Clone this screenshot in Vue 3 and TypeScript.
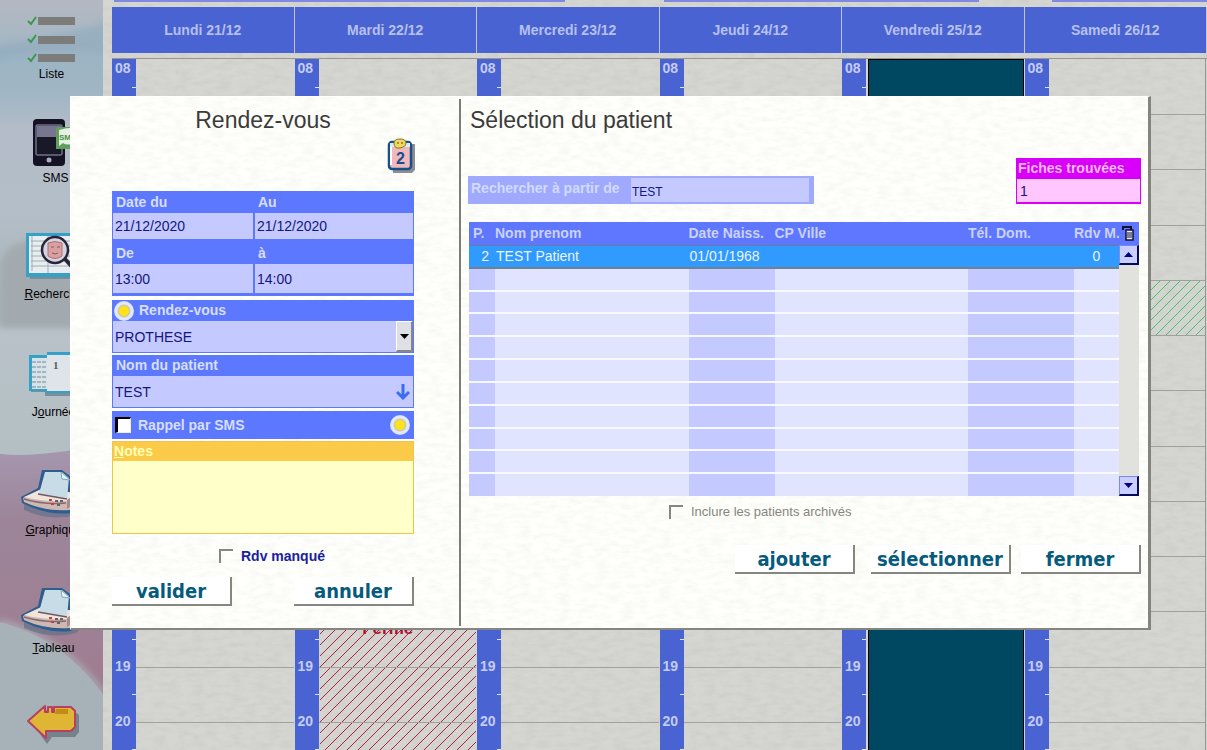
<script setup lang="ts">
import { ref } from 'vue'

interface Patient {
  p: string
  name: string
  birth: string
  city: string
  phone: string
  missed: string
}

interface NavItem {
  id: string
  key: string
  before: string
  after: string
}

interface Hour {
  value: number
  label: string
}

const nav: NavItem[] = [
  { id: 'liste', before: 'Liste', key: '', after: '' },
  { id: 'sms', before: 'SMS', key: '', after: '' },
  { id: 'recherche', before: '', key: 'R', after: 'echerche' },
  { id: 'journee', before: 'J', key: 'o', after: 'urnée' },
  { id: 'graphique', before: '', key: 'G', after: 'raphique' },
  { id: 'tableau', before: '', key: 'T', after: 'ableau' },
  { id: 'retour', before: 'Retour/Exit', key: '', after: '' },
]

const days = ['Lundi 21/12', 'Mardi 22/12', 'Mercredi 23/12', 'Jeudi 24/12', 'Vendredi 25/12', 'Samedi 26/12']

// Hours behind the open dialog keep their row but carry no label.
const hours: Hour[] = Array.from({ length: 13 }, (_, i) => {
  const value = i + 8
  const covered = value > 8 && value < 19
  return { value, label: covered ? '' : String(value).padStart(2, '0') }
})

const dateFrom = ref('21/12/2020')
const dateTo = ref('21/12/2020')
const timeFrom = ref('13:00')
const timeTo = ref('14:00')
const kind = ref('PROTHESE')
const patientName = ref('TEST')
const smsReminder = ref(false)
const notes = ref('')
const missed = ref(false)
const search = ref('TEST')
const found = ref('1')
const archived = ref(false)

const patients: Patient[] = [
  { p: '2', name: 'TEST Patient', birth: '01/01/1968', city: '', phone: '', missed: '0' },
]
const emptyRows = 10
</script>

<template>
  <div class="app">
    <nav class="sidebar">
      <svg class="scenery" viewBox="0 0 103 750" preserveAspectRatio="none" aria-hidden="true">
        <defs>
          <linearGradient id="sky" x1="0" y1="0" x2="0" y2="1">
            <stop offset="0" stop-color="#b3b8c0" />
            <stop offset=".04" stop-color="#aab8c4" />
            <stop offset=".08" stop-color="#9cb4c4" />
            <stop offset=".13" stop-color="#a2b6c4" />
            <stop offset=".17" stop-color="#b3bcc8" />
            <stop offset=".28" stop-color="#b4bec8" />
            <stop offset=".42" stop-color="#a8b2b8" />
            <stop offset=".44" stop-color="#b8c2c8" />
            <stop offset=".6" stop-color="#b4bfc4" />
          </linearGradient>
          <linearGradient id="heather" x1="0" y1="0" x2="0" y2="1">
            <stop offset="0" stop-color="#a698b0" />
            <stop offset=".3" stop-color="#9c8599" />
            <stop offset="1" stop-color="#a07c90" />
          </linearGradient>
          <filter id="soft"><feGaussianBlur stdDeviation="3" /></filter>
        </defs>
        <rect width="103" height="750" fill="url(#sky)" />
        <path d="M-5 46 Q50 38 108 22 V54 Q50 50 -5 60Z" fill="#92acbe" filter="url(#soft)" opacity=".7" />
        <path d="M0 264 Q8 240 36 240 H103 V328 H0Z" fill="#a2aaaf" filter="url(#soft)" />
        <path d="M0 454 Q40 458 103 444 V700 L0 640Z" fill="url(#heather)" />
        <path d="M0 622 Q62 638 103 694 V750 H0Z" fill="#a7b2b8" />
        <path d="M0 622 Q62 638 103 694" fill="none" stroke="#aab0b8" stroke-width="5" filter="url(#soft)" />
      </svg>
      <a v-for="item in nav" :key="item.id" href="#" class="nav-item" :class="item.id">
        <svg v-if="item.id === 'liste'" class="nav-icon" viewBox="0 0 48 48">
          <g fill="#7c7d7a"><rect x="10" y="1" width="37" height="8" /><rect x="10" y="20" width="37" height="8" /><rect x="10" y="38" width="37" height="8" /></g>
          <path d="M0 5l3 3 5-7M0 23l3 3 5-7M0 42l3 3 5-7" fill="none" stroke="#3d9648" stroke-width="2" />
        </svg>
        <svg v-else-if="item.id === 'sms'" class="nav-icon" viewBox="0 0 48 48">
          <rect x="5" y="0" width="32" height="47" rx="4" fill="#151323" />
          <rect x="8" y="6" width="26" height="30" rx="1" fill="#181827" stroke="#9ba0b5" />
          <path d="M9 7h24v11H9z" fill="#77758f" />
          <circle cx="21" cy="41" r="2.5" fill="#a9afbd" />
          <path d="M29 8h19v22H28V10z" fill="#5f9f5b" />
          <path d="M31 11q13-4 17 0v13q-9 3-13 0l-4 3z" fill="#e4f0e2" />
          <text x="31" y="21" font-size="8" font-weight="700" fill="#47904a" font-family="Liberation Sans, sans-serif">SMS</text>
        </svg>
        <svg v-else-if="item.id === 'recherche'" class="nav-icon" viewBox="0 0 48 48">
          <path d="M0 3h48v44H2z" fill="#7d8b92" />
          <path d="M-2 1h50v44H-2z" fill="#36a0c8" />
          <path d="M1 4h44v37H1z" fill="#e8edf0" />
          <path d="M3 9h40M3 14h40M3 19h40M3 24h40M3 29h40M3 34h40M20 4v37M4 4v35" stroke="#a0adb3" fill="none" />
          <circle cx="27" cy="18" r="13" fill="#d6d5df" stroke="#29263c" stroke-width="2.5" />
          <path d="M20 11q7-3 14 0v13q-7 5-14 0z" fill="#d9a0a0" stroke="#b36e76" />
          <path d="M23 15h3m3 0h3M24 21q3 2 6 0" stroke="#8f5560" fill="none" />
          <path d="M37 27l9 10" stroke="#29263c" stroke-width="4" />
        </svg>
        <svg v-else-if="item.id === 'journee'" class="nav-icon" viewBox="0 0 48 48">
          <path d="M3 9h15V5h30v41H17v-4H3z" fill="#7c8f98" />
          <path d="M1 5h18V2h29v41H17v-2H1z" fill="#35a0c8" />
          <path d="M4 8h15v31H4z" fill="#d8e3e9" /><path d="M19 5h23v36H19z" fill="#dee4e7" />
          <path d="M4 12h15M4 17h15M4 22h15M4 27h15M4 32h15M4 37h15" stroke="#718a96" stroke-dasharray="4 1" />
          <text x="25" y="19" font-size="11" font-weight="700" fill="#555c66" font-family="Liberation Serif, serif">1</text>
        </svg>
        <svg v-else-if="item.id === 'graphique' || item.id === 'tableau'" class="nav-icon" viewBox="0 0 48 48">
          <path d="M-4 36l20-10 42-10v22l-10 9Q22 54-4 42z" fill="#63708a" opacity=".7" />
          <path d="M-7 29l17-9 4-18h20l8 6 1 12 9 5v13l-9 7Q20 48-6 35z" fill="#2f5d8e" />
          <path d="M-5 30l18-9 36 4-7 9v8Q18 44-4 34z" fill="#cdb8b4" />
          <path d="M-4 29l18-8 34 4-8 8Q14 34-4 29z" fill="#f0e4dd" />
          <path d="M-4 31q20 6 42 4" fill="none" stroke="#8a6b6c" stroke-width="1.500" />
          <path d="M17 4h17l7 6-2 21-28-5z" fill="#c8dce8" />
          <path d="M33 4l1 7 8 1z" fill="#eef5f8" stroke="#7ba8c0" />
          <path d="M10 26l29 5" stroke="#6d5a60" stroke-width="1.500" />
          <path d="M21 32h3m-1 4h3" stroke="#c14143" stroke-width="2" />
          <path d="M27 33h3m2 0h3m-6 4h3" stroke="#63616a" stroke-width="2" />
          <path d="M39 32v9l8-6v-9z" fill="#a58c8c" />
        </svg>
        <svg v-else class="nav-icon" viewBox="0 0 48 48">
          <path d="M4 19L21 4v3h25l5 4v17l-4 5H24l-5 7z" fill="#77818a" />
          <path d="M0 17L17 2v6h3V3h4v5h2V3h17l4 4v16l-4 4H18v7z" fill="#dfb633" stroke="#b63f63" stroke-width="2" stroke-linejoin="round" />
          <path d="M28 5h12v5H27z" fill="#c28a16" />
        </svg>
        <span class="nav-label">{{ item.before }}<u v-if="item.key">{{ item.key }}</u>{{ item.after }}</span>
      </a>
    </nav>

    <main class="calendar">
      <div class="weeks"><span></span><span></span><span></span></div>
      <div class="day-heads">
        <div v-for="d in days" :key="d" class="day-head">{{ d }}</div>
      </div>
      <div class="day-grid">
        <section v-for="(d, i) in days" :key="d" class="day" :class="{ closed: i === 4 }">
          <div class="hours">
            <div v-for="h in hours" :key="h.value" class="hour"><span v-if="h.label">{{ h.label }}</span></div>
          </div>
          <div class="slots">
            <div v-for="h in hours" :key="h.value" class="slot">
              <div v-if="i === 1 && h.value === 18" class="event evening">Fermé</div>
              <div v-if="i === 5 && h.value === 12" class="event noon"></div>
            </div>
          </div>
        </section>
      </div>
    </main>

    <div class="dialog" role="dialog" aria-label="Rendez-vous">
      <form class="appointment" @submit.prevent>
        <h2>Rendez-vous</h2>
        <button type="button" class="calendar-button" aria-label="Calendrier">
          <svg viewBox="0 0 30 36" width="30" height="36">
            <path d="M5 6h24v26l-3 3H7z" fill="#8c8e91" />
            <rect x="3" y="4" width="22" height="27" rx="3" fill="#f2b9bd" stroke="#16508a" stroke-width="2.5" />
            <path d="M4 5h20v4H4z" fill="#dcecf7" /><path d="M5 9v18" stroke="#fff" stroke-width="2" />
            <path d="M8 5q0-4 6-4t6 4-6 5-6-5z" fill="#efd95c" stroke="#85702c" />
            <path d="M12 4v2m4-2v2" stroke="#5e4820" />
            <text x="10" y="26" font-size="16" font-weight="700" fill="#174f8c" font-family="Liberation Sans, sans-serif">2</text>
          </svg>
        </button>

        <div class="box dates">
          <label for="du">Date du</label><label for="au">Au</label>
          <input id="du" v-model="dateFrom" type="text"><input id="au" v-model="dateTo" type="text">
          <label for="de">De</label><label for="a">à</label>
          <input id="de" v-model="timeFrom" type="text" class="tall"><input id="a" v-model="timeTo" type="text" class="tall">
        </div>

        <div class="box">
          <label for="kind" class="with-dot"><i class="dot"></i>Rendez-vous</label>
          <div class="select-wrap">
            <select id="kind" v-model="kind"><option>PROTHESE</option></select>
            <span class="select-arrow"><svg viewBox="0 0 9 5" width="9" height="5"><path d="M0 0h9L4.500 5z" fill="#000" /></svg></span>
          </div>
        </div>

        <div class="box">
          <label for="patient">Nom du patient</label>
          <div class="name-row">
            <input id="patient" v-model="patientName" type="text">
            <button type="button" aria-label="Choisir le patient">
              <svg viewBox="0 0 14 16" width="14" height="16"><path d="M7 0v13M1 8l6 6 6-6" fill="none" stroke="#3c6cf0" stroke-width="3" /></svg>
            </button>
          </div>
        </div>

        <div class="box reminder">
          <label><input v-model="smsReminder" type="checkbox" class="check">Rappel par SMS</label>
          <i class="dot"></i>
        </div>

        <div class="notes">
          <label for="notes"><u>N</u>otes</label>
          <textarea id="notes" v-model="notes"></textarea>
        </div>

        <label class="missed"><input v-model="missed" type="checkbox" class="corner-check">Rdv manqué</label>
        <div class="actions">
          <button type="button">valider</button>
          <button type="button">annuler</button>
        </div>
      </form>

      <section class="selection">
        <h2>Sélection du patient</h2>
        <div class="search-row">
          <div class="search">
            <label for="search">Rechercher à partir de</label>
            <input id="search" v-model="search" type="text">
          </div>
          <div class="found">
            <label for="found">Fiches trouvées</label>
            <input id="found" v-model="found" type="text">
          </div>
        </div>

        <div class="list">
          <table>
            <colgroup><col class="c-p"><col><col class="c-birth"><col><col class="c-phone"><col class="c-missed"></colgroup>
            <thead>
              <tr><th>P.</th><th>Nom prenom</th><th>Date Naiss.</th><th>CP Ville</th><th>Tél. Dom.</th><th>Rdv M.</th></tr>
            </thead>
            <tbody>
              <tr v-for="p in patients" :key="p.name" class="selected">
                <td class="num">{{ p.p }}</td><td>{{ p.name }}</td><td>{{ p.birth }}</td><td>{{ p.city }}</td><td>{{ p.phone }}</td><td class="count">{{ p.missed }}</td>
              </tr>
              <tr v-for="n in emptyRows" :key="n"><td></td><td></td><td></td><td></td><td></td><td></td></tr>
            </tbody>
          </table>
          <div class="list-side">
            <button type="button" class="columns" aria-label="Colonnes">
              <svg viewBox="0 0 13 15" width="13" height="15"><path d="M1 4V1h8v3" fill="none" stroke="#101030" stroke-width="2" /><rect x="4" y="4" width="7" height="10" fill="#e8ebff" stroke="#101030" stroke-width="1.500" /><path d="M5 7h5M5 9h5M5 11h5" stroke="#101030" /></svg>
            </button>
            <button type="button" class="scroll" aria-label="Monter"><svg viewBox="0 0 9 5" width="9" height="5"><path d="M0 5h9L4.500 0z" fill="#000080" /></svg></button>
            <div class="track"></div>
            <button type="button" class="scroll" aria-label="Descendre"><svg viewBox="0 0 9 5" width="9" height="5"><path d="M0 0h9L4.500 5z" fill="#000080" /></svg></button>
          </div>
        </div>

        <label class="archived"><input v-model="archived" type="checkbox" class="corner-check">Inclure les patients archivés</label>
        <div class="actions">
          <button type="button">ajouter</button>
          <button type="button" class="wide">sélectionner</button>
          <button type="button">fermer</button>
        </div>
      </section>
    </div>
  </div>
</template>

<style>
body {
  margin: 0;
}
</style>

<style scoped>
.app {
  --paper: url("data:image/svg+xml,%3Csvg xmlns='http://www.w3.org/2000/svg' width='256' height='256'%3E%3Cfilter id='p' x='0' y='0' width='100%25' height='100%25'%3E%3CfeTurbulence type='fractalNoise' baseFrequency='.08 .2' numOctaves='3' seed='4' stitchTiles='stitch'/%3E%3CfeColorMatrix values='0 0 0 0 .45 0 0 0 0 .45 0 0 0 0 .42 1.400 0 0 0 -.5'/%3E%3C/filter%3E%3Crect width='256' height='256' filter='url(%23p)' opacity='.3' transform='rotate(0)'/%3E%3C/svg%3E");
  position: relative;
  display: flex;
  height: 100vh;
  overflow: hidden;
  background: var(--paper) #d5d6d1;
  font-family: "Liberation Sans", Arial, sans-serif;
  font-size: 14px;
}
* {
  box-sizing: border-box;
}
button {
  padding: 0;
  cursor: pointer;
}
input,
select,
textarea {
  margin: 0;
  border: 0;
  border-radius: 0;
  font: inherit;
  color: #15157c;
}

/* Navigation */
.sidebar {
  position: relative;
  flex: 0 0 103px;
  padding-top: 16px;
  overflow: hidden;
}
.scenery {
  position: absolute;
  inset: 0;
  width: 100%;
  height: 100%;
}
.nav-item {
  position: relative;
  display: flex;
  flex-direction: column;
  align-items: center;
  gap: 6px;
  height: 118px;
  color: #000;
  font-size: 12px;
  line-height: 16px;
  text-decoration: none;
}
.nav-item.liste {
  height: 103px;
  gap: 2px;
}
.nav-item.sms {
  height: 113px;
  gap: 3px;
}
.nav-icon {
  width: 48px;
  height: 48px;
  overflow: visible;
}
.nav-label {
  padding-left: 4px;
}
.liste .nav-label {
  padding-left: 0;
}
.sms .nav-label {
  padding-left: 8px;
}

/* Week view */
.calendar {
  flex: 1;
  min-width: 0;
  padding-left: 9px;
}
.weeks {
  display: grid;
  grid-template-columns: 451fr 99fr 315fr 73fr 155fr;
  height: 7px;
  padding-left: 2px;
}
.weeks span {
  height: 2px;
  background: #7d8ae0;
}
.weeks span:nth-child(2) {
  grid-column: 3;
}
.weeks span:nth-child(3) {
  grid-column: 5;
}
.day-heads,
.day-grid {
  display: grid;
  grid-template-columns: repeat(6, 1fr);
}
.day-head {
  height: 46px;
  border-right: 1px solid #c0c4e4;
  background: #4a63d3;
  color: #b6c0ec;
  font-weight: 700;
  line-height: 46px;
  text-align: center;
}
.day-grid {
  height: 719px;
  margin-top: 5px;
  border-top: 1px solid #96978f;
}
.day {
  display: flex;
}
.hours,
.slots {
  display: grid;
  grid-template-rows: repeat(13, 1fr);
}
.hours {
  width: 24px;
  background: #4a63d3;
}
.hour {
  position: relative;
  padding-left: 3px;
  color: #c4ccf2;
  font-weight: 700;
}
.hour span {
  display: block;
  margin-top: -9px;
  line-height: 16px;
}
.hour:first-child span {
  margin-top: 1px;
}
.hour::after {
  position: absolute;
  top: 50%;
  right: 0;
  width: 4px;
  height: 1px;
  background: #dfe4fa;
  content: "";
}
.slots {
  flex: 1;
  margin-right: 1px;
}
.day:last-child .slots {
  border-right: 1px solid #96978f;
}
.slot {
  position: relative;
}
.slot + .slot {
  border-top: 1px solid #a0a19b;
}
.event {
  position: absolute;
  top: 0;
  right: 0;
  left: 1px;
}
.event.evening {
  height: 300%;
  padding-top: 7px;
  padding-right: 20px;
  background: url("data:image/svg+xml,%3Csvg xmlns='http://www.w3.org/2000/svg' width='11' height='11'%3E%3Cpath d='M-1 12L12-1M-1 1L1-1M10 12L12 10' stroke='%23b3223c'/%3E%3C/svg%3E");
  color: #b01030;
  font-size: 17px;
  font-weight: 700;
  text-align: center;
}
.event.noon {
  height: 100%;
  background: url("data:image/svg+xml,%3Csvg xmlns='http://www.w3.org/2000/svg' width='10' height='10'%3E%3Cpath d='M-1 11L11-1M-1 1L1-1M9 11L11 9' stroke='%2348c468'/%3E%3C/svg%3E");
}
.closed .slots {
  margin-left: 2px;
  border: 1px solid #000;
  background: #004862;
}
.closed .slot + .slot {
  border-color: transparent;
}

/* Dialog */
.dialog {
  position: absolute;
  top: 96px;
  right: 56px;
  left: 70px;
  display: grid;
  grid-template-columns: 390px 1fr;
  padding-bottom: 2px;
  border: 1px solid #fff;
  border-right: 3px solid #84857f;
  border-bottom: 2px solid #84857f;
  background: var(--paper) #fefefa;
}
.dialog::before {
  position: absolute;
  inset: 0;
  background: rgb(255 255 251 / 50%);
  content: "";
}
.appointment,
.selection {
  position: relative;
  padding-top: 9px;
  margin-top: 2px;
}
.appointment {
  padding-right: 45px;
  padding-bottom: 20px;
  padding-left: 41px;
  border-right: 2px solid #7c7d78;
}
.selection {
  padding-right: 7px;
  padding-left: 7px;
}
h2 {
  margin: 0;
  color: #3b3b3b;
  font-size: 23px;
  font-weight: 400;
  line-height: 25px;
}
.appointment h2 {
  text-align: center;
}
.selection h2 {
  padding-left: 2px;
}
.calendar-button {
  display: block;
  width: 30px;
  height: 36px;
  margin: 5px -2px 17px auto;
  border: 0;
  background: none;
}
.box {
  margin-bottom: 2px;
  padding: 0 1px 1px;
  background: #5c78ff;
}
.box label {
  display: block;
  padding-left: 3px;
  color: #d6defc;
  font-weight: 700;
  line-height: 21px;
}
.box > input,
.name-row,
.select-wrap {
  height: 31px;
  background: #c4caff;
}
.box input[type="text"] {
  width: 100%;
  padding: 0 0 0 2px;
}
.dates {
  display: grid;
  grid-template-columns: 140fr 158fr;
  column-gap: 2px;
  margin-bottom: 4px;
  padding-bottom: 3px;
}
.dates > input {
  height: 26px;
}
.dates > .tall {
  height: 29px;
}
.dates label {
  line-height: 22px;
}
.dates label:nth-of-type(n + 3) {
  padding-top: 3px;
}
.box .with-dot {
  display: flex;
  align-items: center;
  gap: 5px;
  padding-left: 1px;
}
.dot {
  flex: none;
  width: 20px;
  height: 20px;
  border-radius: 50%;
  background: radial-gradient(circle, #ffe312 0 4px, #c9c9b8 6px, #e4e8fc 7px 9px, #cbd2fa 10px);
}
.select-wrap {
  position: relative;
  display: flex;
}
select {
  flex: 1;
  padding: 0 0 0 2px;
  appearance: none;
  background: transparent;
}
.select-arrow {
  position: absolute;
  top: 0;
  right: 0;
  bottom: 0;
  display: grid;
  place-items: center;
  width: 17px;
  border: 1px solid #fff;
  border-right: 2px solid #85868c;
  border-bottom: 2px solid #85868c;
  background: #dfdfe6;
  pointer-events: none;
}
.name-row {
  display: flex;
}
.name-row input {
  flex: 1;
  min-width: 0;
  background: transparent;
}
.name-row button {
  display: grid;
  place-items: center;
  width: 20px;
  border: 0;
  background: none;
}
.reminder {
  display: flex;
  align-items: center;
  justify-content: space-between;
  height: 28px;
  margin-top: 3px;
  padding: 0 4px 0 0;
}
.reminder label {
  display: flex;
  align-items: center;
  gap: 7px;
}
.check {
  appearance: none;
  width: 16px;
  height: 16px;
  border: 1px solid #eee;
  border-top: 2px solid #000;
  border-left: 3px solid #000;
  background: #fff;
}
.notes {
  border: 1px solid #f0c34c;
  background: #ffffca;
}
.notes label {
  display: block;
  padding-left: 1px;
  background: #fbca48;
  color: #ffffb8;
  font-weight: 700;
  line-height: 19px;
}
.notes textarea {
  display: block;
  width: 100%;
  height: 72px;
  background: transparent;
  resize: none;
}
.missed,
.archived {
  display: flex;
  align-items: center;
  line-height: 16px;
}
.missed {
  gap: 8px;
  margin: 14px 0 13px 107px;
  color: #1a1f9c;
  font-weight: 700;
}
.corner-check {
  appearance: none;
  width: 14px;
  height: 14px;
  border-top: 2px solid #85867e;
  border-left: 2px solid #85867e;
}
.actions {
  display: flex;
  justify-content: space-between;
}
.actions button {
  width: 120px;
  height: 29px;
  border: 0;
  border-right: 2px solid #858680;
  border-bottom: 2px solid #858680;
  background: #fff;
  color: #065a7c;
  font-family: "DejaVu Sans Condensed", "DejaVu Sans", sans-serif;
  font-size: 20px;
  font-weight: 700;
  line-height: 26px;
}

/* Patient selection */
.search-row {
  display: flex;
  align-items: flex-end;
  justify-content: space-between;
  margin-top: 25px;
}
.search {
  display: flex;
  align-items: center;
  flex: 0 0 346px;
  height: 28px;
  padding: 0 5px 0 3px;
  background: #9faaff;
}
.search label {
  flex: 1;
  padding-bottom: 4px;
  color: #d2dafc;
  font-weight: 700;
}
.search input {
  width: 178px;
  height: 24px;
  padding: 3px 1px 0;
  background: #c4caff;
  font-size: 12px;
}
.found {
  width: 125px;
  padding: 0 1px 2px;
  background: #d800f8;
}
.found label {
  display: block;
  padding-left: 1px;
  color: #fcb8fc;
  font-weight: 700;
  line-height: 21px;
}
.found input {
  display: block;
  width: 100%;
  height: 23px;
  padding: 0 3px;
  background: #ffc6ff;
}
.list {
  display: grid;
  grid-template-columns: 1fr 20px;
  margin: 18px 2px 8px 1px;
}
table {
  width: 100%;
  height: 274px;
  border-collapse: collapse;
  table-layout: fixed;
}
.c-p {
  width: 26px;
}
.c-birth {
  width: 86px;
}
.c-phone {
  width: 106px;
}
.c-missed {
  width: 45px;
}
th {
  height: 23px;
  padding: 0;
  background: #5f76ff;
  color: #c9d2fb;
  font-weight: 700;
  text-align: left;
  white-space: nowrap;
}
th:first-child {
  padding-left: 4px;
}
td {
  height: 22px;
  padding: 0 1px;
  border-bottom: 2px solid #f8f9ff;
  background: #e0e4ff;
}
td:nth-child(1),
td:nth-child(3),
td:nth-child(5) {
  background: #c4caff;
}
tr:last-child td {
  border-bottom: 0;
}
tr.selected td {
  border-top: 1px solid #6a7aa0;
  border-bottom: 2px solid #6d8292;
  background: #309aff;
  color: #eaf5ff;
}
.num {
  text-align: right;
}
tr.selected .num {
  padding-right: 6px;
}
.count {
  text-align: center;
}
.list-side {
  display: flex;
  flex-direction: column;
}
.columns {
  height: 23px;
  border: 0;
  background: #5f76ff;
}
.columns svg {
  display: block;
  margin: 0 3px;
}
.scroll {
  display: grid;
  place-items: center;
  height: 20px;
  border: 1px solid #7c88f4;
  border-right: 2px solid #08085c;
  border-bottom: 2px solid #08085c;
  background: #c8ceff;
}
.track {
  flex: 1;
  background: #e1e2de;
}
.archived {
  gap: 8px;
  margin-left: 201px;
  color: #85867f;
  font-size: 13px;
}
.selection .actions {
  justify-content: flex-end;
  gap: 10px;
  margin-top: 25px;
}
.selection .actions .wide {
  width: 140px;
  margin-left: 6px;
}
</style>
